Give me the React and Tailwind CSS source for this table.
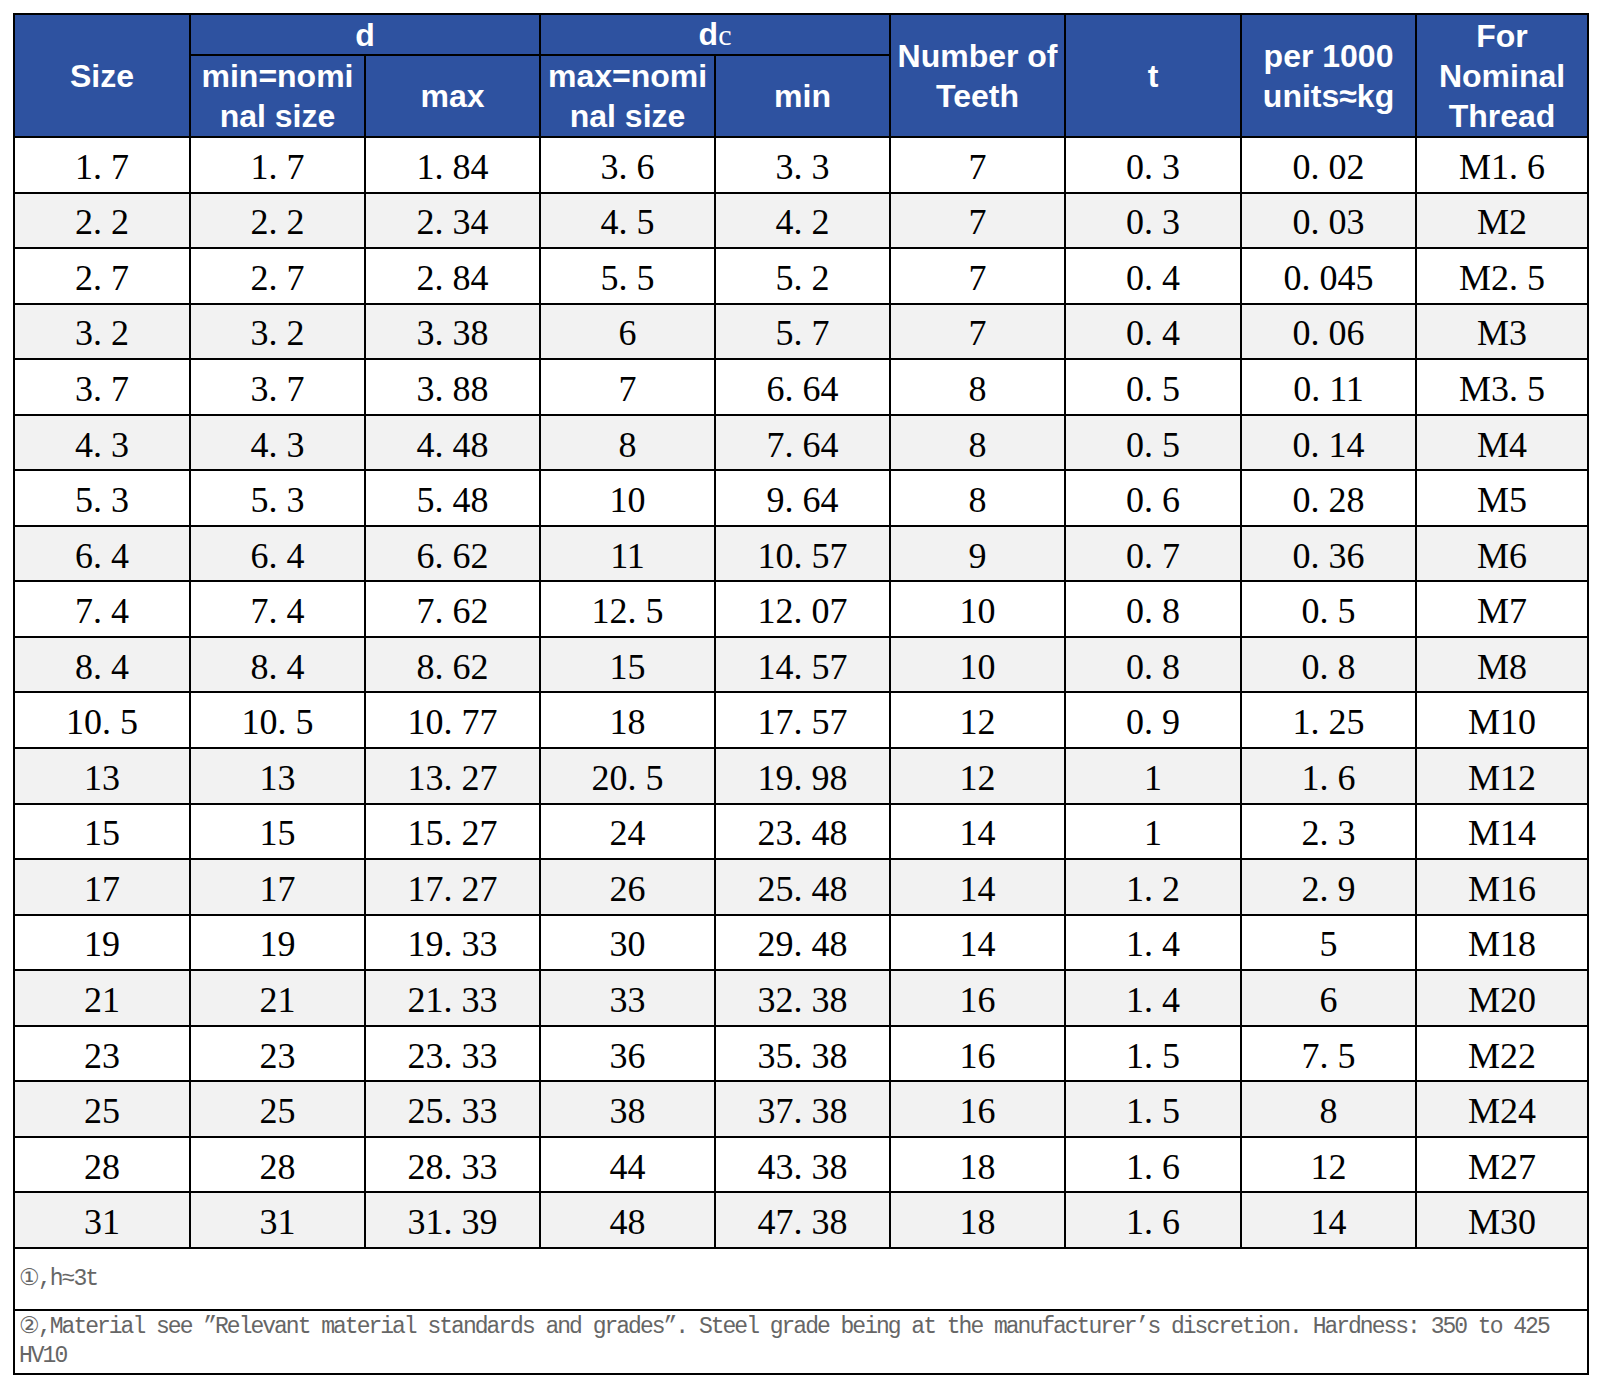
import React from 'react';

const rows = [
  ['1. 7', '1. 7', '1. 84', '3. 6', '3. 3', '7', '0. 3', '0. 02', 'M1. 6'],
  ['2. 2', '2. 2', '2. 34', '4. 5', '4. 2', '7', '0. 3', '0. 03', 'M2'],
  ['2. 7', '2. 7', '2. 84', '5. 5', '5. 2', '7', '0. 4', '0. 045', 'M2. 5'],
  ['3. 2', '3. 2', '3. 38', '6', '5. 7', '7', '0. 4', '0. 06', 'M3'],
  ['3. 7', '3. 7', '3. 88', '7', '6. 64', '8', '0. 5', '0. 11', 'M3. 5'],
  ['4. 3', '4. 3', '4. 48', '8', '7. 64', '8', '0. 5', '0. 14', 'M4'],
  ['5. 3', '5. 3', '5. 48', '10', '9. 64', '8', '0. 6', '0. 28', 'M5'],
  ['6. 4', '6. 4', '6. 62', '11', '10. 57', '9', '0. 7', '0. 36', 'M6'],
  ['7. 4', '7. 4', '7. 62', '12. 5', '12. 07', '10', '0. 8', '0. 5', 'M7'],
  ['8. 4', '8. 4', '8. 62', '15', '14. 57', '10', '0. 8', '0. 8', 'M8'],
  ['10. 5', '10. 5', '10. 77', '18', '17. 57', '12', '0. 9', '1. 25', 'M10'],
  ['13', '13', '13. 27', '20. 5', '19. 98', '12', '1', '1. 6', 'M12'],
  ['15', '15', '15. 27', '24', '23. 48', '14', '1', '2. 3', 'M14'],
  ['17', '17', '17. 27', '26', '25. 48', '14', '1. 2', '2. 9', 'M16'],
  ['19', '19', '19. 33', '30', '29. 48', '14', '1. 4', '5', 'M18'],
  ['21', '21', '21. 33', '33', '32. 38', '16', '1. 4', '6', 'M20'],
  ['23', '23', '23. 33', '36', '35. 38', '16', '1. 5', '7. 5', 'M22'],
  ['25', '25', '25. 33', '38', '37. 38', '16', '1. 5', '8', 'M24'],
  ['28', '28', '28. 33', '44', '43. 38', '18', '1. 6', '12', 'M27'],
  ['31', '31', '31. 39', '48', '47. 38', '18', '1. 6', '14', 'M30'],
];

const th = 'border-2 border-black bg-[#2e52a0] text-white font-bold text-[32px] leading-[40px] text-center align-middle p-0';
const thTop = 'border-2 border-black bg-[#2e52a0] text-white font-bold text-[32px] leading-[38px] text-center align-middle p-0';
const td = 'border-2 border-black text-center align-middle p-0 pt-[4px] text-[36px] leading-[40px] text-black';
const note = "border-2 border-black px-[4px] text-left font-['Liberation_Mono',monospace] text-[23px] tracking-[-2px] text-[#666666] whitespace-nowrap";

export default function App() {
  return (
    <div className="min-h-screen bg-white pl-[13px] pt-[13px]">
      <table className="table-fixed border-collapse w-[1574px] font-['Liberation_Sans',Arial,sans-serif]">
        <colgroup>
          <col className="w-[176px]" />
          <col className="w-[175px]" />
          <col className="w-[175px]" />
          <col className="w-[175px]" />
          <col className="w-[175px]" />
          <col className="w-[175px]" />
          <col className="w-[176px]" />
          <col className="w-[175px]" />
          <col className="w-[172px]" />
        </colgroup>
        <thead>
          <tr className="h-[41px]">
            <th rowSpan={2} className={th}>Size</th>
            <th colSpan={2} className={thTop}>d</th>
            <th colSpan={2} className={thTop}>
              d<span className="font-['Liberation_Serif',serif] font-normal text-[30px]">c</span>
            </th>
            <th rowSpan={2} className={th}>Number of<br />Teeth</th>
            <th rowSpan={2} className={th}>t</th>
            <th rowSpan={2} className={th}>per 1000<br />units≈kg</th>
            <th rowSpan={2} className={th}>For<br />Nominal<br />Thread</th>
          </tr>
          <tr className="h-[81px]">
            <th className={th}>min=nomi<br />nal size</th>
            <th className={th}>max</th>
            <th className={th}>max=nomi<br />nal size</th>
            <th className={th}>min</th>
          </tr>
        </thead>
        <tbody className="font-['Liberation_Serif','Times_New_Roman',serif]">
          {rows.map((r, i) => (
            <tr key={i} className={i % 2 === 0 ? 'h-[55.55px] bg-white' : 'h-[55.55px] bg-[#f2f2f2]'}>
              {r.map((c, j) => (
                <td key={j} className={td}>{c}</td>
              ))}
            </tr>
          ))}
          <tr className="h-[62px]">
            <td colSpan={9} className={note + ' align-middle'}>
              ①,h≈3t
            </td>
          </tr>
          <tr className="h-[64px]">
            <td colSpan={9} className={note + ' align-top pt-[2px] leading-[29px]'}>
              ②,Material see ”Relevant material standards and grades”. Steel grade being at the manufacturer’s discretion. Hardness: 350 to 425<br />HV10
            </td>
          </tr>
        </tbody>
      </table>
    </div>
  );
}
